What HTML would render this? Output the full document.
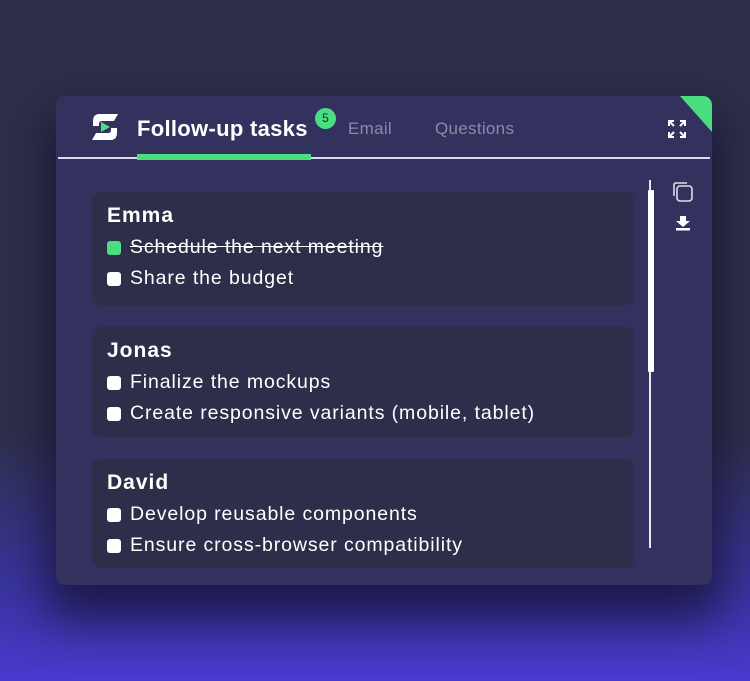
<!DOCTYPE html>
<html><head><style>
*{margin:0;padding:0;box-sizing:border-box}
body{width:750px;height:681px;overflow:hidden;font-family:"Liberation Sans",sans-serif;
background:linear-gradient(180deg,#2e3049 0px,#2e3049 430px,#3a34a0 590px,#4a3acf 681px);position:relative}
.card{position:absolute;left:56px;top:96px;width:656px;height:489px;background:#33325e;border-radius:9px;
box-shadow:0 25px 45px 10px rgba(20,18,50,.75);overflow:hidden}
.corner{position:absolute;right:0;top:0;width:0;height:0;border-top:36px solid #4ade80;border-left:32px solid transparent}
.logo{position:absolute;left:34px;top:18px}
.title{position:absolute;left:81px;top:20px;color:#fff;font-size:22px;font-weight:bold;letter-spacing:0.3px}
.badge{position:absolute;left:259px;top:12px;width:21px;height:21px;border-radius:50%;background:#4ade80;color:#1e2a2a;font-size:12px;text-align:center;line-height:21px}
.tab{position:absolute;top:23px;color:#8a8aa8;font-size:17px;letter-spacing:0.3px}
.sep{position:absolute;left:2px;top:61px;width:652px;height:2px;background:#dcdce8}
.ul{position:absolute;left:81px;top:58px;width:174px;height:6px;background:#4ade80}
.box{position:absolute;left:36px;width:542px;background:#2d2f4a;border-radius:8px;padding:12px 0 0 15px;color:#fff}
.box h3{font-size:21px;font-weight:bold;margin-bottom:6px;height:24px;letter-spacing:1px}
.it{font-size:19.5px;height:31px;line-height:26px;position:relative;padding-left:23px;letter-spacing:0.9px}
.it:before{content:"";position:absolute;left:0;top:7px;width:14px;height:14px;border-radius:3px;background:#fff}
.done:before{background:#4ade80}
.done{text-decoration:line-through}
.track{position:absolute;left:593px;top:84px;width:2px;height:368px;background:#e8e8f0}
.thumb{position:absolute;left:592px;top:94px;width:6px;height:182px;background:#fff;border-radius:1px}
</style></head><body>
<div class="card">
<div class="corner"></div>
<svg class="logo" width="30" height="26" viewBox="0 0 30 26"><path d="M8 0H28L24 7H12Q9 7 9 10V12H3V7Q3 1 8 0Z" fill="#fff"/><path d="M22 26H2L6 19H18Q21 19 21 16V14H27V19Q27 25 22 26Z" fill="#fff"/><path d="M11 8L20 13L11 18Z" fill="#4ade80"/></svg>
<div class="title">Follow-up tasks</div>
<div class="badge">5</div>
<div class="tab" style="left:292px">Email</div>
<div class="tab" style="left:379px">Questions</div>
<svg style="position:absolute;left:612px;top:24px" width="18" height="18" viewBox="0 0 18 18" fill="none" stroke="#fff" stroke-width="2"><path d="M1 6V1H6M1 1L6 6M12 1H17V6M17 1L12 6M1 12V17H6M1 17L6 12M12 17H17V12M17 17L12 12"/></svg>
<div class="sep"></div>
<div class="ul"></div>
<svg style="position:absolute;left:616px;top:85px" width="22" height="22" viewBox="0 0 22 22" fill="none" stroke="#dcdce8" stroke-width="1.6"><rect x="5" y="5" width="15" height="15" rx="3"/><path d="M2 15V4Q2 2 4 2H15"/></svg>
<svg style="position:absolute;left:619px;top:120px" width="16" height="15" viewBox="0 0 16 15" fill="#fff"><path d="M5 0H11V5H15L8 11L1 5H5Z"/><rect x="1" y="12" width="14" height="2.5"/></svg>
<div class="track"></div><div class="thumb"></div>
<div class="box" style="top:96px;height:113px"><h3>Emma</h3><div class="it done">Schedule the next meeting</div><div class="it">Share the budget</div></div>
<div class="box" style="top:231px;height:110px"><h3>Jonas</h3><div class="it">Finalize the mockups</div><div class="it">Create responsive variants (mobile, tablet)</div></div>
<div class="box" style="top:363px;height:109px"><h3>David</h3><div class="it">Develop reusable components</div><div class="it">Ensure cross-browser compatibility</div></div>
</div>
</body></html>
